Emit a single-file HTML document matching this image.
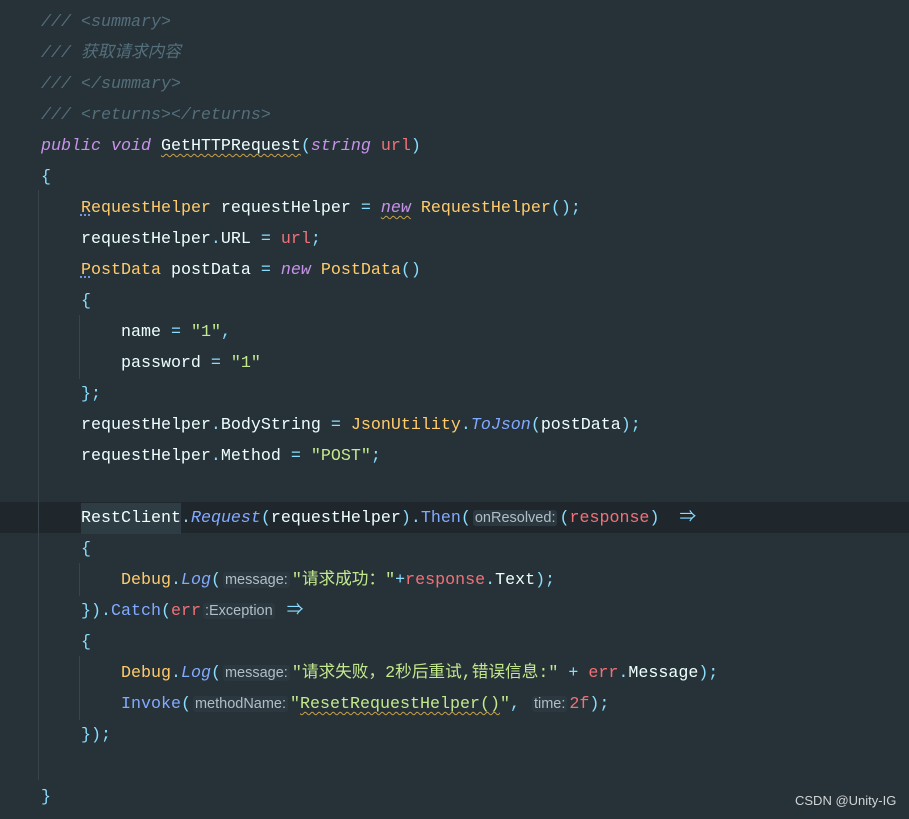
<!DOCTYPE html>
<html><head><meta charset="utf-8"><style>
body{margin:0;width:909px;height:819px;background:#263238;overflow:hidden;position:relative}
.code{position:absolute;left:41px;top:7px;font-family:"Liberation Mono","Noto Sans CJK SC",monospace;font-size:16.67px;line-height:31px;color:#eeffff}
.l{height:31px;white-space:pre}
.c{color:#546e7a;font-style:italic}
.k{color:#c792ea;font-style:italic}
.t{color:#ffcb6b}
.p{color:#89ddff}
.v{color:#f07178}
.m{color:#82aaff;font-style:italic}
.mn{color:#82aaff}
.s{color:#c3e88d}
.h{font-family:"Liberation Sans","Noto Sans CJK SC",sans-serif;font-size:14.5px;color:#b0bec5;background:#2c383f;border-radius:3px;padding:0 2px;margin:0 2px}
.wav{text-decoration:underline wavy #c9a24a;text-decoration-thickness:1px;text-underline-offset:3px}
.dot{text-decoration:underline dotted #82aaff;text-underline-offset:3px}
.hl{position:absolute;left:0;top:502px;width:909px;height:31px;background:#1f272d}
.g{position:absolute;width:1px;background:#37444c}
.wm{position:absolute;left:795px;top:793px;font:13px "Liberation Sans",sans-serif;color:#d0d4d6}
</style></head><body>
<div class="hl"></div>
<div class="g" style="left:38px;top:190px;height:590px"></div>
<div class="g" style="left:79px;top:315px;height:64px"></div>
<div class="g" style="left:79px;top:563px;height:33px"></div>
<div class="g" style="left:79px;top:656px;height:64px"></div>
<div class="code"><div class="l c">/// &lt;summary&gt;</div><div class="l c">/// 获取请求内容</div><div class="l c">/// &lt;/summary&gt;</div><div class="l c">/// &lt;returns&gt;&lt;/returns&gt;</div><div class="l"><span class="k">public void</span> <span class="wav">GetHTTPRequest</span><span class="p">(</span><span class="k">string</span> <span class="v">url</span><span class="p">)</span></div><div class="l p">{</div><div class="l">    <span class="t"><span class="dot">R</span>equestHelper</span> requestHelper <span class="p">=</span> <span class="k wav">new</span> <span class="t">RequestHelper</span><span class="p">();</span></div><div class="l">    requestHelper<span class="p">.</span>URL <span class="p">=</span> <span class="v">url</span><span class="p">;</span></div><div class="l">    <span class="t"><span class="dot">P</span>ostData</span> postData <span class="p">=</span> <span class="k">new</span> <span class="t">PostData</span><span class="p">()</span></div><div class="l p">    {</div><div class="l">        name <span class="p">=</span> <span class="s">"1"</span><span class="p">,</span></div><div class="l">        password <span class="p">=</span> <span class="s">"1"</span></div><div class="l p">    };</div><div class="l">    requestHelper<span class="p">.</span>BodyString <span class="p">=</span> <span class="t">JsonUtility</span><span class="p">.</span><span class="m">ToJson</span><span class="p">(</span>postData<span class="p">);</span></div><div class="l">    requestHelper<span class="p">.</span>Method <span class="p">=</span> <span class="s">"POST"</span><span class="p">;</span></div><div class="l"> </div><div class="l">    <span style="background:#2e3c43;display:inline-block">RestClient</span><span class="p">.</span><span class="m">Request</span><span class="p">(</span>requestHelper<span class="p">).</span><span class="mn">Then</span><span class="p">(</span><span class="h">onResolved:</span><span class="p">(</span><span class="v">response</span><span class="p">)</span>  <span class="p">⇒</span></div><div class="l p">    {</div><div class="l">        <span class="t">Debug</span><span class="p">.</span><span class="m">Log</span><span class="p">(</span><span class="h">message:</span><span class="s">"请求成功："</span><span class="p">+</span><span class="v">response</span><span class="p">.</span>Text<span class="p">);</span></div><div class="l">    <span class="p">}).</span><span class="mn">Catch</span><span class="p">(</span><span class="v">err</span><span class="h">:Exception</span> <span class="p">⇒</span></div><div class="l p">    {</div><div class="l">        <span class="t">Debug</span><span class="p">.</span><span class="m">Log</span><span class="p">(</span><span class="h">message:</span><span class="s">"请求失败，2秒后重试,错误信息:"</span> <span class="p">+</span> <span class="v">err</span><span class="p">.</span>Message<span class="p">);</span></div><div class="l">        <span class="mn">Invoke</span><span class="p">(</span><span class="h">methodName:</span><span class="s">"<span class="wav">ResetRequestHelper()</span>"</span><span class="p">,</span> <span class="h">time:</span><span class="v">2f</span><span class="p">);</span></div><div class="l p">    });</div><div class="l"> </div><div class="l p">}</div></div>
<div class="wm">CSDN @Unity-IG</div>
</body></html>
